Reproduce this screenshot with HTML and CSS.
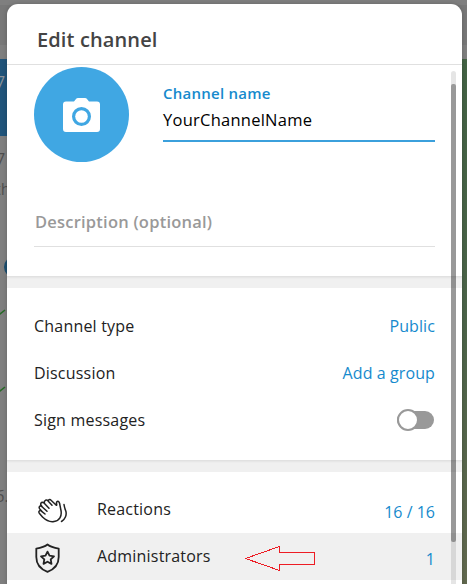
FILE: index.html
```html
<!DOCTYPE html>
<html lang="en">
<head>
<meta charset="utf-8">
<title>Edit channel</title>
<link rel="stylesheet" href="styles.css">
</head>
<body>
<div class="backdrop">
  <div class="backdrop-top"></div>
  <div class="backdrop-main">
    <div class="chats">
      <div class="chat active"><span class="time">7</span></div>
      <div class="chat"><span class="time">7</span><span class="snippet">th</span></div>
      <svg class="marks" width="8" height="160" viewBox="0 0 8 160" fill="none">
        <circle cx="15" cy="14" r="11" fill="#1d4f70"/>
        <path d="M-3 58 0 61 5 57M-3 135 0 138 5 134" stroke="#276b27" stroke-width="1.6"/>
      </svg>
      <span class="snippet last">б.</span>
    </div>
    <div class="wallpaper"></div>
  </div>
</div>
<main class="modal">
  <header class="head"><h1>Edit channel</h1></header>
  <section class="profile">
    <div class="identity">
      <div class="avatar">
        <svg width="37" height="34" viewBox="0 0 37 34"><path fill="#fff" fill-rule="evenodd" d="M3 3.500h8L13.200.8Q13.800 0 15 0h7q1.200 0 1.800.8L26 3.500h8q3 0 3 3V31q0 3-3 3H3q-3 0-3-3V6.500q0-3 3-3ZM18.500 9a9.500 9.500 0 1 0 0 19 9.500 9.500 0 0 0 0-19Z"/><circle cx="18.500" cy="18.500" r="6.300" fill="#fff"/></svg>
      </div>
      <div class="field">
        <span class="label">Channel name</span>
        <span class="value">YourChannelName</span>
      </div>
    </div>
    <div class="description">Description (optional)</div>
  </section>
  <section class="settings">
    <div class="row"><span>Channel type</span><span class="link">Public</span></div>
    <div class="row"><span>Discussion</span><span class="link">Add a group</span></div>
    <div class="row"><span>Sign messages</span><span class="toggle"><span class="knob"></span></span></div>
  </section>
  <section class="manage">
    <div class="row item">
      <svg class="icon" width="32" height="28" viewBox="0 0 32 28" fill="none" stroke="#222" stroke-width="1.500" stroke-linecap="round" stroke-linejoin="round">
        <path d="M7.500 22 4.300 18.200Q3.300 16.400 4.700 15.700 5.600 15.300 7 16.600L10 19M7 16.600 4.600 13.700Q3.500 11.800 5.200 11 6.200 10.700 7.300 12L12 16.300M7.300 12 5.900 10Q5.200 8 7 7.300 8.200 7.200 9.500 8.500L14 13.200M9.500 8.500Q8.800 6.200 10.500 5.300 12 4.600 13.300 6.200L17 10.200M13.300 6.200Q13.800 4 15.500 4.700L21.300 10.300Q21.800 10.500 21.700 9.500 21 6.400 22.700 6.300 24.300 6.400 24.700 9L26 15.500C27 21 24.500 26 19 26.500 14.500 27.300 11 25.300 7.500 22"/>
        <path d="M29 9.500Q29.500 13 30.800 16C32 20 30 24.500 26.500 26.500"/>
      </svg>
      <span class="name">Reactions</span><span class="link count">16 / 16</span>
    </div>
    <div class="row item hover">
      <svg class="icon shield" width="32" height="30" viewBox="0 0 32 30" fill="none" stroke="#222" stroke-width="1.800" stroke-linejoin="round">
        <path d="M13.500 1.500C16.800 4.200 20.200 4.900 24.700 5.600V14C24.700 21 20.200 26.300 13.500 28.800 6.800 26.300 2.300 21 2.300 14V5.600C6.800 4.900 10.200 4.200 13.500 1.500Z"/>
        <path d="m13.500 8.600 2 4.100 4.500.6-3.300 3.100.8 4.500-4-2.200-4 2.200.8-4.500-3.300-3.100 4.500-.6Z"/>
      </svg>
      <span class="name">Administrators</span>
      <svg class="arrow" width="71" height="26" viewBox="0 0 71 26" fill="none" stroke="#ed1c24" shape-rendering="crispEdges"><path d="M.5 12.500 34.500.5V6.500H69.500V18.500H34.500V24.500Z"/></svg>
      <span class="link count">1</span>
    </div>
  </section>
  <div class="scroll"><div class="thumb"></div></div>
</main>
</body>
</html>
```
FILE: styles.css
```css
* { box-sizing: border-box; }
body {
  margin: 0;
  height: 584px;
  overflow: hidden;
  position: relative;
  font: 16px/22px "Open Sans", sans-serif;
  color: #222;
}
.backdrop { height: 584px; background: #7f7f7f; display: flex; flex-direction: column; }
.backdrop-top { height: 59px; background: linear-gradient(#7f7f7f 0 5px, #787878 5px 45px, #7f7f7f 45px); }
.backdrop-main { flex: 1; display: flex; justify-content: space-between; }
.chats { width: 7px; overflow: hidden; display: flex; flex-direction: column; }
.chat { height: 77px; padding-top: 12px; display: flex; flex-direction: column; color: #4d4d4d; }
.chat.active { background: #20547a; color: #8b9299; }
.time { margin-left: -4px; }
.snippet { margin: 8px 0 0 -5px; color: #505050; }
.marks { margin-top: 40px; flex: none; }
.snippet.last { margin: 72px 0 0 -5px; }
.wallpaper { width: 5px; background: linear-gradient(#436344, #4c6449 50%, #62694f); }
.modal {
  position: absolute;
  left: 7px;
  top: 4px;
  width: 455px;
  height: 600px;
  background: #fff;
  border-radius: 11px 11px 0 0;
  box-shadow: 0 0 5px rgba(0,0,0,.2);
  overflow: hidden;
}
.head { height: 61px; border-bottom: 1px solid #e0e0e0; padding: 22px 0 0 30px; }
h1 { margin: 0; font-size: 20px; line-height: 28px; font-weight: 600; letter-spacing: .12px; color: #444; }
.profile { height: 211px; padding: 2px 27px 0; }
.identity { display: flex; gap: 34px; }
.avatar {
  width: 95px; height: 95px; border-radius: 50%; background: #40a7e3;
  display: flex; align-items: center; justify-content: center;
}
.field { flex: 1; height: 75px; padding-top: 15px; border-bottom: 2px solid #3ba0dc; display: flex; flex-direction: column; gap: 5px; color: #000; }
.label { font-size: 15px; font-weight: 600; letter-spacing: .25px; color: #168acd; }
.value { font-size: 16.500px; letter-spacing: .25px; }
.description { margin-top: 49px; height: 36px; padding-left: 1px; border-bottom: 1px solid #e0e0e0; font-size: 16.500px; font-weight: 600; letter-spacing: .22px; color: #999; }
.settings, .manage { border-top: 12px solid #f0f0f0; position: relative; }
.settings::before, .manage::before { content: ""; position: absolute; left: 0; right: 0; top: -12px; height: 3px; background: linear-gradient(#dedede, #f0f0f0); }
.settings { height: 184px; padding-top: 14px; }
.manage { padding-top: 14px; }
.row { height: 47px; padding: 0 27px; display: flex; align-items: center; justify-content: space-between; letter-spacing: .2px; }
.link { color: #168acd; letter-spacing: .1px; }
.toggle { width: 37px; height: 22px; margin-right: 1px; position: relative; }
.toggle::before { content: ""; position: absolute; inset: 2px 0; border-radius: 9px; background: #999; }
.knob { display: block; position: relative; width: 22px; height: 22px; border: 2px solid #999; border-radius: 50%; background: #fff; }
.icon { width: 32px; flex: none; }
.item .icon { margin: 0 0 2px 1px; }
.item .shield { margin: 2px 1px 0 0; }
.name { margin: -2px 0 0 30px; }
.item .count { margin-left: auto; padding-top: 5px; letter-spacing: 0; }
.hover { background: #f0f0f0; }
.arrow { margin: 5px 0 0 34px; flex: none; }
.scroll { position: absolute; left: 444px; top: 67px; width: 5px; height: 540px; border-radius: 3px; background: rgba(0,0,0,.1); }
.thumb { margin-top: 13px; height: 458px; border-radius: 2px; background: rgba(0,0,0,.33); }
```
